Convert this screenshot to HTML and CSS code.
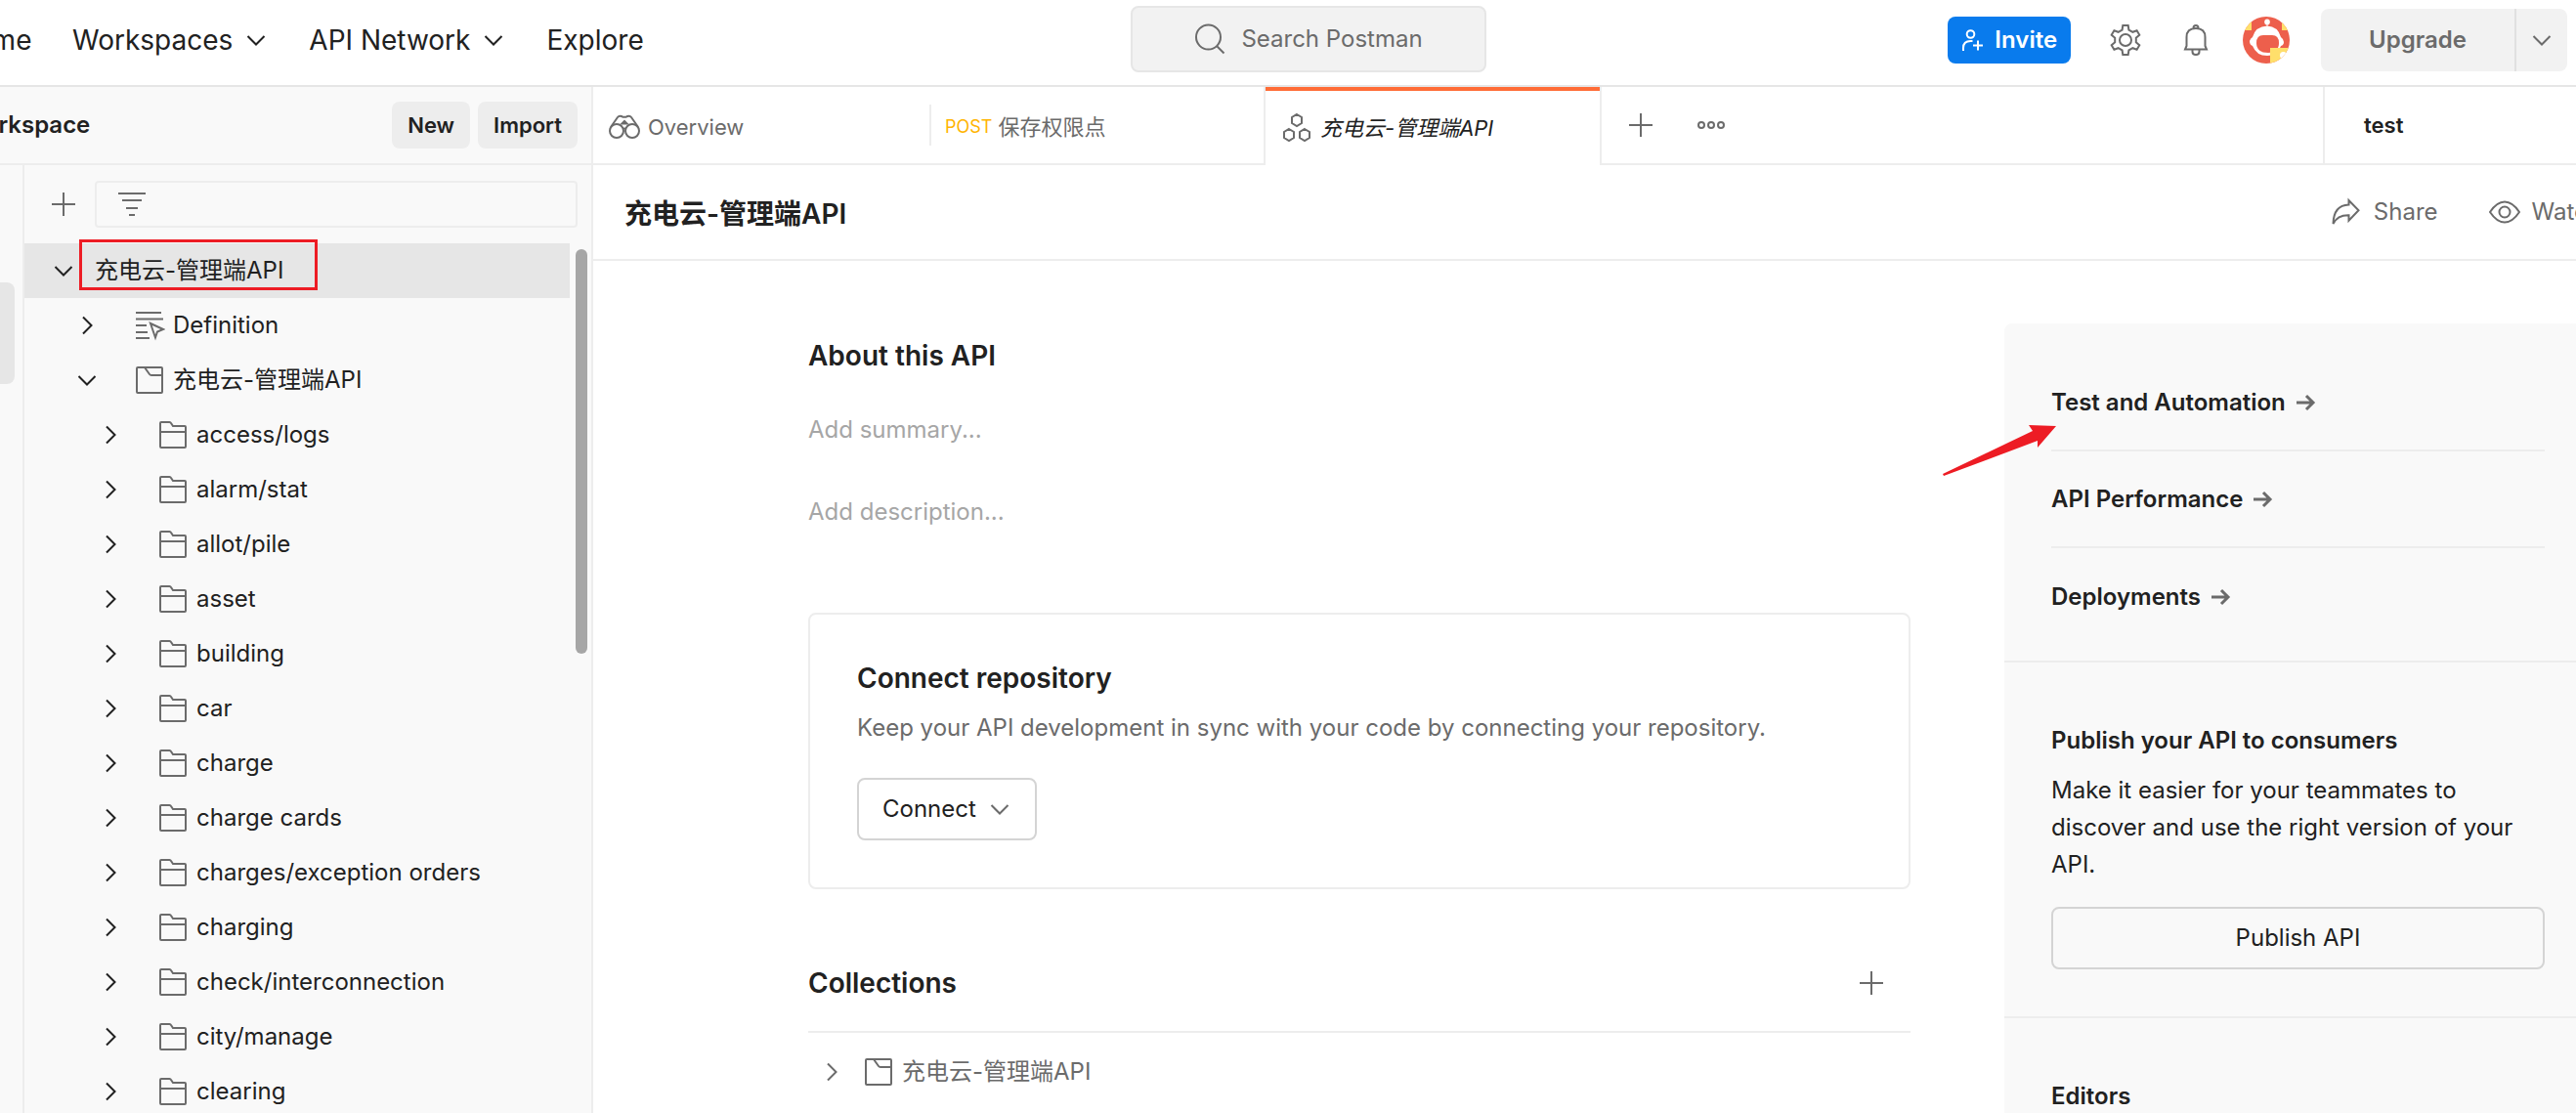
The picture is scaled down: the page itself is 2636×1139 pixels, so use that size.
FILE: index.html
```html
<!DOCTYPE html>
<html lang="zh-CN">
<head>
<meta charset="utf-8">
<meta name="viewport" content="width=device-width, initial-scale=1">
<title>充电云-管理端API</title>
<link rel="stylesheet" href="styles.css">
</head>
<body>
<svg class="sprite" aria-hidden="true">
  <symbol id="down" viewBox="0 0 24 24"><path d="M3.5 8l8.500 8.500L20.500 8" class="ln"/></symbol>
  <symbol id="right" viewBox="0 0 24 24"><path d="M8 3.500l8.500 8.500L8 20.500" class="ln"/></symbol>
  <symbol id="plus" viewBox="0 0 24 24"><path d="M12 0v24M0 12h24" class="ln"/></symbol>
  <symbol id="folder" viewBox="0 0 32 32"><path d="M3 28V4q0-1 1-1h8.500q1 0 1.500 1l2 3h12q1 0 1 1v20q0 1-1 1H4q-1 0-1-1zM3 13h26" class="ln"/></symbol>
  <symbol id="collection" viewBox="0 0 32 32"><path d="M3 28V4q0-1 1-1h24q1 0 1 1v24q0 1-1 1H4q-1 0-1-1zM11 3l5 7q.7 1 2 1h11" class="ln"/></symbol>
  <symbol id="arrow" viewBox="0 0 24 24"><path d="M3 12h17M13 5l7 7-7 7" class="ln bold"/></symbol>
</svg>

<header class="topbar">
  <nav class="mainnav">
    <a href="#" class="home">Home</a>
    <button class="navitem">Workspaces<svg class="i24"><use href="#down"/></svg></button>
    <button class="navitem">API Network<svg class="i24"><use href="#down"/></svg></button>
    <a href="#">Explore</a>
  </nav>
  <button class="search"><svg class="i32" viewBox="0 0 32 32"><circle cx="14.500" cy="14" r="12.500" class="ln"/><path d="M23 23l7.500 7.500" class="ln"/></svg>Search Postman</button>
  <div class="actions">
    <button class="invite"><svg class="i24" viewBox="0 0 24 24"><circle cx="9.500" cy="6" r="3.800" class="ln"/><path d="M2 23v-3q0-7 7.500-7h2M17 12.500v10M12 17.500h10" class="ln"/></svg>Invite</button>
    <button class="icon gear" aria-label="Settings"><svg class="i32" viewBox="0 0 32 32"><path d="M12.600 5.500L13.300 1h5.400l.7 4.500 4 2.300 4.200-1.600 2.700 4.600-3.500 2.900v4.600l3.500 2.900-2.700 4.600-4.200-1.600-4 2.300-.7 4.500h-5.400l-.7-4.500-4-2.300-4.200 1.600-2.700-4.600 3.500-2.900v-4.600l-3.500-2.900 2.700-4.600 4.200 1.600z" class="ln"/><circle cx="16" cy="16" r="6" class="ln"/></svg></button>
    <button class="icon bell" aria-label="Notifications"><svg class="i32" viewBox="0 0 32 32"><path d="M5 25.500h22l-1.500-3.500V13q0-9-9.500-9-9.500 0-9.500 9v9zM13.500 4V3.500Q13.500 1 16 1t2.500 2.500V4M12.500 26v2q0 3 3.500 3t3.500-3v-2" class="ln"/></svg></button>
    <button class="icon avatar" aria-label="Account"><svg viewBox="0 0 48 48"><clipPath id="round"><circle cx="24" cy="24" r="24"/></clipPath><g clip-path="url(#round)"><path fill="#ed5f4c" d="M0 0h48v48H0z"/><path fill="#ffdf6b" d="M0 5h9v9H0zM40 5h8v9h-8z"/><ellipse cx="25" cy="5.500" rx="2.800" ry="3" fill="#fff"/><path fill="#fff" d="M24.500 7h1v4h-1zM7 25q1-3 3-4Q13 10 25 9.500 36 10 39 21q3 2 3 5t-3 4Q36 40 25 40T10 30q-3-1-3-5z"/><path fill="#ed5f4c" d="M14 27q0-8 7-8h9q7 0 7 8 0 10-11 10-12 0-12-10z"/><path fill="#ffdf6b" d="M28 32h20v16H28z"/><circle cx="41.500" cy="39.500" r="3.500" fill="#fff"/></g></svg></button>
    <div class="upgrade"><button>Upgrade</button><button class="more" aria-label="Upgrade options"><svg class="i24"><use href="#down"/></svg></button></div>
  </div>
</header>

<div class="app">
  <aside class="sidebar">
    <div class="wsbar"><h2 class="wsname">My Workspace</h2><button class="small">New</button><button class="small">Import</button></div>
    <div class="sidebody">
      <div class="rail"><div class="railtab"></div></div>
      <div class="treepane">
        <div class="filter"><button class="icon" aria-label="Create"><svg class="i24"><use href="#plus"/></svg></button>
          <div class="filterbox"><svg class="filtericon" viewBox="0 0 28 24"><path d="M0 1h28M4 8h20M8 16h12M11 23h6" class="ln"/></svg><input aria-label="Filter APIs"></div></div>
        <div class="treewrap">
          <ul class="tree">
            <li class="root"><svg class="i24"><use href="#down"/></svg><span class="marked">充电云-管理端API</span></li>
            <li class="l1"><svg class="i24"><use href="#right"/></svg><svg class="i32" viewBox="0 0 32 32"><path d="M2 3h26M2 9.500h28M2 16h11M2 23h12M2 29h14M17 14l13 6-6 2.500-2 6z" class="ln"/></svg>Definition</li>
            <li class="l1"><svg class="i24"><use href="#down"/></svg><svg class="i32"><use href="#collection"/></svg>充电云-管理端API</li>
            <li class="l2"><svg class="i24"><use href="#right"/></svg><svg class="i32"><use href="#folder"/></svg>access/logs</li>
            <li class="l2"><svg class="i24"><use href="#right"/></svg><svg class="i32"><use href="#folder"/></svg>alarm/stat</li>
            <li class="l2"><svg class="i24"><use href="#right"/></svg><svg class="i32"><use href="#folder"/></svg>allot/pile</li>
            <li class="l2"><svg class="i24"><use href="#right"/></svg><svg class="i32"><use href="#folder"/></svg>asset</li>
            <li class="l2"><svg class="i24"><use href="#right"/></svg><svg class="i32"><use href="#folder"/></svg>building</li>
            <li class="l2"><svg class="i24"><use href="#right"/></svg><svg class="i32"><use href="#folder"/></svg>car</li>
            <li class="l2"><svg class="i24"><use href="#right"/></svg><svg class="i32"><use href="#folder"/></svg>charge</li>
            <li class="l2"><svg class="i24"><use href="#right"/></svg><svg class="i32"><use href="#folder"/></svg>charge cards</li>
            <li class="l2"><svg class="i24"><use href="#right"/></svg><svg class="i32"><use href="#folder"/></svg>charges/exception orders</li>
            <li class="l2"><svg class="i24"><use href="#right"/></svg><svg class="i32"><use href="#folder"/></svg>charging</li>
            <li class="l2"><svg class="i24"><use href="#right"/></svg><svg class="i32"><use href="#folder"/></svg>check/interconnection</li>
            <li class="l2"><svg class="i24"><use href="#right"/></svg><svg class="i32"><use href="#folder"/></svg>city/manage</li>
            <li class="l2"><svg class="i24"><use href="#right"/></svg><svg class="i32"><use href="#folder"/></svg>clearing</li>
          </ul>
          <div class="scroll"><div class="thumb"></div></div>
        </div>
      </div>
    </div>
  </aside>

  <main class="main">
    <div class="tabs">
      <button class="tab"><svg class="i32" viewBox="0 0 32 32"><circle cx="8" cy="20" r="7" class="ln"/><circle cx="24" cy="20" r="7" class="ln"/><path d="M2 16L9 6q1.500-2 4-1l1.500.8h3L19 5q2.500-1 4 1l7 10M15 18q1-1 2 0M13.500 12.500l2.500-2.500 2.500 2.500z" class="ln"/></svg>Overview</button>
      <button class="tab post"><span class="method">POST</span>保存权限点</button>
      <button class="tab active"><svg class="i32" viewBox="0 0 32 32"><path d="M16 2l5 3v6l-5 3-5-3V5zM8 17l5 3v6l-5 3-5-3v-6zM24 17l5 3v6l-5 3-5-3v-6z" class="ln"/></svg><em>充电云-管理端API</em></button>
      <div class="tabtools">
        <button class="icon" aria-label="New tab"><svg class="i24"><use href="#plus"/></svg></button>
        <button class="icon" aria-label="More tabs"><svg class="dots" viewBox="0 0 28 10"><circle cx="4" cy="5" r="3" class="ln"/><circle cx="14" cy="5" r="3" class="ln"/><circle cx="24" cy="5" r="3" class="ln"/></svg></button>
      </div>
      <button class="env">test</button>
    </div>
    <div class="titlebar">
      <h1>充电云-管理端API</h1>
      <button class="tool"><svg class="i32" viewBox="0 0 32 32"><path d="M2.500 28Q3 9 18.500 8.500V4l10 10.300-10 10.500v-5.500Q7 19 2.500 28z" class="ln"/></svg>Share</button>
      <button class="tool watch"><svg class="i32" viewBox="0 0 32 32"><path d="M1 16Q8 5.500 16 5.500T31 16Q24 26.500 16 26.500T1 16z" class="ln"/><circle cx="16" cy="16" r="5.500" class="ln"/></svg>Watch</button>
    </div>
    <div class="content">
      <div class="doc">
        <h2>About this API</h2>
        <p class="hint">Add summary...</p>
        <p class="hint desc">Add description...</p>
        <section class="card">
          <h2>Connect repository</h2>
          <p>Keep your API development in sync with your code by connecting your repository.</p>
          <button class="outline">Connect<svg class="i24"><use href="#down"/></svg></button>
        </section>
        <div class="colhead"><h2>Collections</h2><button class="icon" aria-label="Add collection"><svg class="i24"><use href="#plus"/></svg></button></div>
        <div class="colrow"><svg class="i24"><use href="#right"/></svg><svg class="i32"><use href="#collection"/></svg>充电云-管理端API</div>
      </div>
      <aside class="panel">
        <div class="links">
          <a href="#">Test and Automation<svg class="i24"><use href="#arrow"/></svg></a>
          <a href="#">API Performance<svg class="i24"><use href="#arrow"/></svg></a>
          <a href="#">Deployments<svg class="i24"><use href="#arrow"/></svg></a>
          <svg class="pointer" viewBox="0 0 118 52" aria-hidden="true"><path fill="#ed1c24" d="M0 50L92 6l-4-6 28 1-19 22v-7L1 52z"/></svg>
        </div>
        <section class="publish">
          <h3>Publish your API to consumers</h3>
          <p>Make it easier for your teammates to discover and use the right version of your API.</p>
          <button class="outline">Publish API</button>
        </section>
        <section class="editors"><h3>Editors</h3></section>
      </aside>
    </div>
  </main>
</div>
</body>
</html>
```

FILE: styles.css
```css
*, *::after { box-sizing: border-box; }
body {
  margin: 0;
  height: 100vh;
  overflow: hidden;
  display: flex;
  flex-direction: column;
  background: #fff;
  color: #212121;
  font: 24px/32px Inter, "Noto Sans CJK SC", sans-serif;
}
h1, h2, h3, p, ul { margin: 0; padding: 0; }
h1, h2 { font-size: 28px; line-height: 40px; font-weight: 600; }
h3 { font-size: 24px; line-height: 32px; font-weight: 600; }
a { color: inherit; text-decoration: none; }
button {
  font: inherit;
  color: inherit;
  background: none;
  border: 0;
  padding: 0;
  display: flex;
  align-items: center;
  white-space: nowrap;
  cursor: pointer;
}
svg { color: #6b6b6b; flex: none; display: block; }
.sprite { position: absolute; width: 0; height: 0; }
.ln { fill: none; stroke: currentColor; stroke-width: 2; }
.bold { stroke-width: 3; }
.i24 { width: 24px; height: 24px; }
.i32 { width: 32px; height: 32px; }

.topbar {
  flex: none;
  height: 89px;
  border-bottom: 2px solid #e6e6e6;
  display: grid;
  grid-template-columns: minmax(0, 1157fr) 364px minmax(0, 1115fr);
  padding-bottom: 5px;
  align-items: center;
}
.mainnav { display: flex; align-items: center; font-size: 28px; gap: 42px; margin-left: -46px; }
.home { width: 78px; text-align: right; }
.navitem { gap: 12px; }
.navitem svg { color: #212121; }
.search {
  height: 68px;
  margin-bottom: 2px;
  justify-content: center;
  gap: 16px;
  color: #6b6b6b;
  background: #f2f2f2;
  border: 2px solid #e6e6e6;
  border-radius: 8px;
}
.actions { display: flex; align-items: center; justify-content: flex-end; padding-right: 9px; }
.invite { height: 48px; padding: 0 14px; gap: 10px; background: #097bed; color: #fff; font-weight: 600; border-radius: 8px; }
.invite svg { color: #fff; }
.gear { margin-left: 40px; }
.bell { margin-left: 40px; }
.avatar { margin-left: 32px; width: 48px; height: 48px; }
.upgrade { display: flex; margin-left: 32px; height: 64px; background: #f2f2f2; border-radius: 8px; color: #6b6b6b; font-weight: 600; }
.upgrade button { padding: 0 49px; }
.upgrade .more { padding: 0 14px; border-left: 2px solid #e0e0e0; }

.app { flex: 1; min-height: 0; display: flex; }
.sidebar { width: 607px; flex: none; background: #f9f9f9; border-right: 2px solid #ededed; display: flex; flex-direction: column; }
.wsbar { height: 80px; flex: none; border-bottom: 2px solid #ededed; display: flex; align-items: center; gap: 8px; padding-right: 14px; font-size: 22px; font-weight: 600; }
.wsname { flex: 1; font-size: 24px; margin-left: -82px; }
.small { height: 48px; padding: 0 16px; background: #ededed; border-radius: 8px; }
.sidebody { flex: 1; min-height: 0; display: flex; }
.rail { width: 25px; border-right: 2px solid #ededed; padding-top: 120px; }
.railtab { width: 15px; height: 104px; background: #e6e6e6; border-radius: 0 8px 8px 0; }
.treepane { flex: 1; display: flex; flex-direction: column; min-width: 0; }
.filter { display: flex; align-items: center; gap: 20px; padding: 16px 14px 8px 28px; }
.filterbox { flex: 1; height: 48px; border: 2px solid #ededed; border-radius: 4px; display: flex; align-items: center; padding: 0 22px; gap: 16px; }
.filterbox input { flex: 1; min-width: 0; border: 0; background: none; font: inherit; outline: 0; }
.filtericon { width: 28px; height: 24px; }
.treewrap { flex: 1; min-height: 0; display: flex; overflow: hidden; padding-top: 8px; }
.tree { flex: 1; list-style: none; }
.tree li { height: 56px; display: flex; align-items: center; white-space: nowrap; }
.tree .i24:first-child { color: #212121; }
.root { background: #e6e6e6; padding-left: 28px; gap: 20px; }
.marked { position: relative; }
.marked::after { content: ""; position: absolute; left: -16px; right: -35px; top: -16px; height: 52px; border: 3px solid #ed1c24; }
.tree .l1 { padding-left: 52px; }
.tree .l2 { padding-left: 76px; }
.tree .i32 { margin: 0 8px 0 36px; }
.scroll { width: 22px; padding: 6px 4px 0 6px; }
.thumb { width: 12px; height: 414px; border-radius: 6px; background: #a6a6a6; }

.main { flex: 1; min-width: 0; display: flex; flex-direction: column; }
.tabs { height: 80px; flex: none; display: flex; font-size: 22px; }
.tab { width: 344px; padding: 4px 16px 0; gap: 8px; color: #6b6b6b; border-bottom: 2px solid #ededed; }
.tab.post {
  gap: 6px;
  border-right: 2px solid #ededed;
  background: linear-gradient(#ededed, #ededed) left center / 2px 42px no-repeat;
}
.method { font-size: 18px; color: #ffb400; }
.tab.active { color: #212121; border-bottom: 0; border-right: 2px solid #ededed; box-shadow: inset 0 4px #ff6c37; }
.tabtools { flex: 1; display: flex; gap: 46px; padding-left: 28px; border-bottom: 2px solid #ededed; }
.dots { width: 28px; height: 10px; }
.env { width: 259px; padding-left: 40px; font-weight: 600; border-left: 2px solid #ededed; border-bottom: 2px solid #ededed; }
.titlebar { height: 98px; flex: none; display: flex; align-items: center; border-bottom: 2px solid #ededed; padding-left: 32px; overflow: hidden; }
.titlebar h1 { flex: 1; padding-top: 4px; }
.tool { gap: 12px; color: #6b6b6b; margin-right: 52px; }
.watch { margin-right: -26px; }

.content { flex: 1; min-height: 0; overflow: hidden; display: flex; gap: 96px; padding: 64px 0 0 220px; }
.doc { flex: 1; min-width: 0; padding-top: 13px; }
.hint { color: #a6a6a6; margin-top: 40px; }
.desc { margin-top: 52px; }
.card { border: 2px solid #ededed; border-radius: 8px; margin-top: 87px; padding: 45px 48px 48px; }
.card p { color: #6b6b6b; margin: 15px 0 35px; }
.outline { height: 64px; padding: 0 24px; gap: 12px; justify-content: center; border: 2px solid #d4d4d4; border-radius: 8px; }
.colhead { display: flex; justify-content: space-between; align-items: center; padding: 76px 28px 29px 0; border-bottom: 2px solid #ededed; }
.colrow { display: flex; align-items: center; color: #6b6b6b; padding: 24px 12px; }
.colrow .i32 { margin: 0 8px 0 20px; }

.panel { width: 585px; flex: none; background: #f9f9f9; border-top-left-radius: 8px; }
.links { position: relative; padding: 32px 32px 16px 48px; }
.links a { display: flex; align-items: center; gap: 8px; height: 99px; font-weight: 600; border-bottom: 2px solid #ededed; }
.links a:nth-of-type(3) { border-bottom: 0; }
.pointer { position: absolute; left: -63px; top: 104px; width: 118px; height: 52px; }
.publish { border: solid #ededed; border-width: 2px 0; padding: 64px 32px 48px 48px; }
.publish p { line-height: 38px; margin: 16px 0 24px; }
.publish .outline { width: 100%; }
.editors { padding: 64px 48px 0; }
```
